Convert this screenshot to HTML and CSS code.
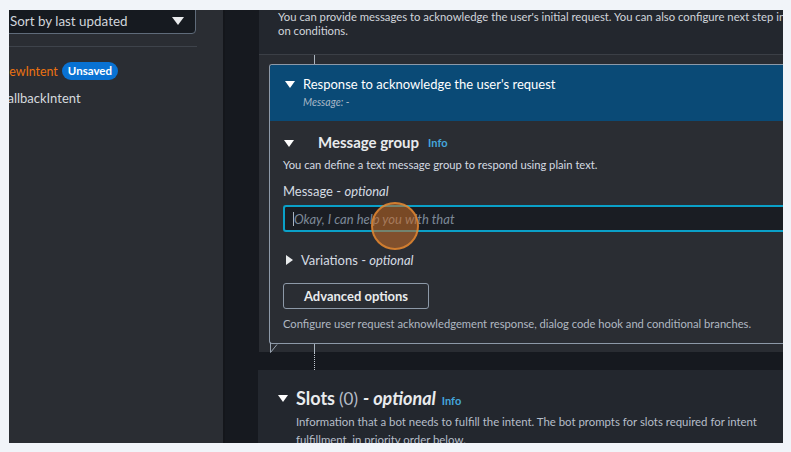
FILE: index.html
```html
<!DOCTYPE html>
<html>
<head>
<meta charset="utf-8">
<link rel="stylesheet" href="styles.css">
</head>
<body>
<div class="frame">
  <aside class="sidebar">
    <div class="sort"><span class="sort-label">Sort by last updated</span><span class="caret"></span></div>
    <div class="sep"></div>
    <ul class="intents">
      <li class="intent intent-new"><span class="intent-name">NewIntent</span><span class="badge">Unsaved</span></li>
      <li class="intent">FallbackIntent</li>
    </ul>
  </aside>
  <main class="main">
    <div class="col">
      <section class="intro">
        <p>You can provide messages to acknowledge the user's initial request. You can also configure next step in the conversation based on conditions.</p>
      </section>
      <section class="resp">
        <div class="stem"></div>
        <div class="card">
          <div class="card-head">
            <span class="tri-down tri-white"></span>
            <div class="head-text">
              <div class="head-title">Response to acknowledge the user's request</div>
              <div class="head-sub">Message: -</div>
            </div>
          </div>
          <div class="card-body">
            <div class="group-row">
              <span class="tri-down tri-white"></span>
              <span class="group-title">Message group</span>
              <span class="info">Info</span>
            </div>
            <p class="desc">You can define a text message group to respond using plain text.</p>
            <label class="field-label">Message - <i>optional</i></label>
            <div class="input"><span class="cursor"></span><span class="placeholder">Okay, I can help you with that</span></div>
            <div class="var-row"><span class="tri-right"></span><span>Variations - <i>optional</i></span></div>
            <button class="btn">Advanced options</button>
            <p class="hint">Configure user request acknowledgement response, dialog code hook and conditional branches.</p>
          </div>
        </div>
        <div class="card-foot">
          <svg class="tail" width="14" height="10" viewBox="0 0 14 10"><path d="M1.5 0 V9.5 L8 1.5" fill="none" stroke="#9aa4b1" stroke-width="1"/></svg>
          <div class="stem stem-foot"></div>
        </div>
      </section>
      <div class="dots"></div>
      <section class="slots">
        <div class="slots-row">
          <span class="tri-down tri-white"></span>
          <span class="slots-title">Slots</span><span class="slots-count">(0)</span><span class="slots-opt">- optional</span>
          <span class="info">Info</span>
        </div>
        <p class="slots-desc">Information that a bot needs to fulfill the intent. The bot prompts for slots required for intent fulfillment, in priority order below.</p>
      </section>
    </div>
    <div class="touch"></div>
  </main>
</div>
</body>
</html>
```

FILE: styles.css
```css
* { box-sizing: border-box; }
html, body { margin: 0; padding: 0; }
body {
  background: #f1f4f9;
  font-family: Lato, "Open Sans", sans-serif;
  width: 791px;
  height: 452px;
  overflow: hidden;
}
p { margin: 0; }
.frame {
  margin: 10px 0 0 9px;
  width: 774px;
  height: 433px;
  display: flex;
  overflow: hidden;
  background: #16191f;
}
.sidebar {
  width: 216px;
  flex: none;
  background: #2a2d33;
  border-right: 2px solid #14161b;
  color: #d1d5db;
  overflow: hidden;
}
.sort {
  margin: -8px 0 0 -10px;
  width: 197px;
  height: 32px;
  border: 1px solid #5f6b7a;
  border-radius: 4px;
  background: #161a20;
  display: flex;
  align-items: center;
  justify-content: space-between;
  padding: 6px 10px 0 10px;
  font-size: 13.4px;
  color: #d1d5db;
}
.caret {
  width: 0; height: 0;
  border-left: 6px solid transparent;
  border-right: 6px solid transparent;
  border-top: 8px solid #e9ebed;
  margin-right: 1px;
}
.sep {
  margin-top: 12px;
  width: 188px;
  height: 1px;
  background: #3e434b;
}
.intents { list-style: none; margin: 0; padding: 0; }
.intent {
  font-size: 13px;
  height: 18px;
  display: flex;
  align-items: center;
  gap: 4px;
  margin-left: -8px;
  color: #d5d9de;
}
.intent-new { margin-top: 15px; margin-left: -9px; }
.intent + .intent { margin-top: 9px; }
.intent-name { color: #ec7211; font-size: 12.4px; }
.badge {
  background: #0972d3;
  color: #fff;
  font-size: 11.5px;
  font-weight: 700;
  padding: 0 6px;
  height: 18px;
  line-height: 18px;
  border-radius: 9px;
}
.main {
  flex: 1;
  padding-left: 34px;
  position: relative;
  overflow: hidden;
}
.col {
  width: 560px;
}
.intro {
  background: #23272e;
  padding: 0 0 0 19px;
  height: 44px;
  font-size: 11.3px;
  line-height: 13.5px;
  color: #d1d5db;
  overflow: hidden;
}
.intro p { width: 640px; }
.resp {
  background: #292c32;
  border-top: 1px solid #3b3f46;
  padding: 0 0 0 10px;
  height: 298px;
}
.stem {
  margin-left: 45px;
  width: 1px;
  height: 9px;
  background: #aab4bf;
}
.card {
  border: 1px solid #8d99a8;
  border-right: none;
  border-radius: 3px 0 0 3px;
  background: #2a2d33;
}
.card-head {
  background: #0a4a76;
  height: 56px;
  display: flex;
  align-items: flex-start;
  padding: 11px 0 0 15px;
  border-radius: 2px 0 0 0;
}
.tri-down {
  width: 0; height: 0;
  border-left: 5px solid transparent;
  border-right: 5px solid transparent;
  border-top: 7px solid #fff;
  flex: none;
}
.card-head .tri-down { margin-top: 5px; margin-right: 8px; }
.head-title { font-size: 13px; color: #fff; line-height: 16px; }
.head-sub { font-size: 10.5px; font-style: italic; color: #a9b8c7; margin-top: 4px; line-height: 13px; }
.card-body {
  padding: 10px 0 12px 13px;
  color: #d5dbe2;
}
.group-row { display: flex; align-items: center; height: 22px; }
.group-row .tri-down { margin-left: 1px; margin-right: 24px; margin-top: 2px; }
.group-title { font-size: 15px; font-weight: 700; color: #e9ebed; }
.info { font-size: 11px; font-weight: 700; color: #44a6dc; margin-left: 9px; }
.desc { font-size: 11.2px; margin-top: 5px; line-height: 14px; }
.field-label { display: block; font-size: 13px; margin-top: 11px; line-height: 16px; }
.input {
  margin-top: 6px;
  height: 27px;
  border: 2px solid #0aa0c8;
  border-right: none;
  border-radius: 3px 0 0 3px;
  background: #1a1d23;
  display: flex;
  align-items: center;
  padding-left: 8px;
}
.cursor { width: 1px; height: 14px; background: #aab4bf; }
.placeholder { font-size: 13px; font-style: italic; color: #7d8998; }
.var-row { display: flex; align-items: center; gap: 8px; margin-top: 19px; font-size: 13px; height: 17px; }
.tri-right {
  width: 0; height: 0;
  border-top: 5px solid transparent;
  border-bottom: 5px solid transparent;
  border-left: 7px solid #e9ebed;
  margin-left: 3px;
}
.btn {
  display: block;
  margin-top: 15px;
  width: 146px;
  height: 26px;
  border: 1px solid #8d99a8;
  border-radius: 3px;
  background: transparent;
  color: #e9ebed;
  font-family: inherit;
  font-size: 13px;
  font-weight: 700;
  padding: 0;
}
.hint { font-size: 11.2px; color: #b0b8c2; margin-top: 8px; line-height: 14px; }
.card-foot { display: flex; height: 9px; }
.tail { margin-top: -1px; flex: none; }
.stem-foot { margin-left: 31px; height: 9px; }
.dots {
  margin-left: 55px;
  height: 18px;
  border-left: 1px dotted #c3cad3;
}
.slots {
  background: #23272e;
  margin-left: -1px;
  height: 80px;
  padding: 17px 0 0 20px;
}
.slots-row { display: flex; align-items: baseline; color: #e9ebed; }
.slots-row .tri-down { align-self: center; margin-right: 8px; margin-top: 1px; }
.slots-title { font-size: 18px; font-weight: 700; }
.slots-count { font-size: 17px; color: #b6bec9; margin-left: 4px; }
.slots-opt { font-size: 18px; font-weight: 700; font-style: italic; margin-left: 5px; }
.slots .info { margin-left: 6px; }
.slots-desc { font-size: 11.4px; line-height: 18px; color: #b6bec9; margin: 4px 0 0 18px; width: 500px; }
.touch {
  position: absolute;
  left: 146px;
  top: 192px;
  width: 48px;
  height: 48px;
  border-radius: 50%;
  background: rgba(200, 110, 40, 0.55);
  border: 2px solid rgba(236, 140, 50, 0.75);
}
```
